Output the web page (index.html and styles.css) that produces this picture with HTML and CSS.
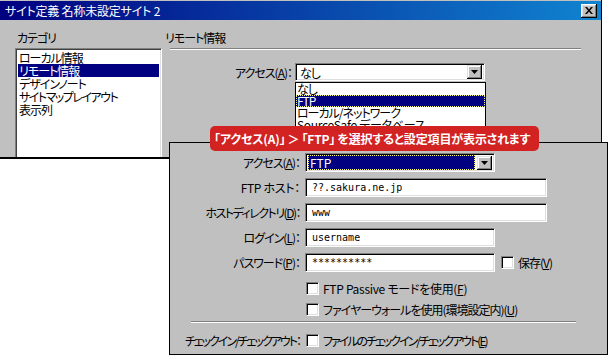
FILE: index.html
```html
<!DOCTYPE html>
<html lang="ja">
<head>
<meta charset="utf-8">
<title>サイト定義</title>
<link rel="stylesheet" href="styles.css">
</head>
<body>
<div class="stage">
  <div class="win">
    <div class="titlebar">
      <span class="title">サイト定義 名称未設定サイト 2</span>
      <span class="close"><svg width="8" height="7" viewBox="0 0 8 7"><path d="M0 0h2l2 2.4L6 0h2L5 3.5 8 7H6L4 4.6 2 7H0l3-3.5z" fill="#000"/></svg></span>
    </div>
    <div class="wbody">
      <div class="cat">
        <div class="lbl">カテゴリ</div>
        <ul class="listbox">
          <li>ローカル情報</li>
          <li class="sel">リモート情報</li>
          <li>デザインノート</li>
          <li class="tight">サイトマップレイアウト</li>
          <li>表示列</li>
        </ul>
      </div>
      <div class="remote">
        <div class="lbl">リモート情報</div>
        <div class="etch etch-top"></div>
        <div class="access">
          <span class="alabel">アクセス(<u>A</u>)：</span>
          <div class="combo">
            <span class="cval">なし</span>
            <span class="dbtn"><svg width="7" height="4" viewBox="0 0 7 4"><path d="M0 0h7L3.5 4z" fill="#000"/></svg></span>
          </div>
        </div>
        <ul class="droplist">
          <li>なし</li>
          <li class="sel">FTP</li>
          <li>ローカル/ネットワーク</li>
          <li class="latin">SourceSafe データベース</li>
        </ul>
      </div>
    </div>
  </div>

  <div class="banner">「アクセス(A)」 ＞ 「FTP」 を選択すると設定項目が表示されます</div>

  <div class="panel">
    <div class="row">
      <span class="plabel">アクセス(<u>A</u>)：</span>
      <div class="combo w190">
        <span class="cval selv">FTP</span>
        <span class="dbtn"><svg width="7" height="4" viewBox="0 0 7 4"><path d="M0 0h7L3.5 4z" fill="#000"/></svg></span>
      </div>
    </div>
    <div class="row">
      <span class="plabel latin">FTP ホスト：</span>
      <div class="field w242">??.sakura.ne.jp</div>
    </div>
    <div class="row">
      <span class="plabel tight">ホストディレクトリ(<u>D</u>)：</span>
      <div class="field w242">www</div>
    </div>
    <div class="row">
      <span class="plabel">ログイン(<u>L</u>)：</span>
      <div class="field w190">username</div>
    </div>
    <div class="row">
      <span class="plabel">パスワード(<u>P</u>)：</span>
      <div class="field w190">**********</div>
      <span class="chk chk-save"></span>
      <span class="ctext">保存(<u>V</u>)</span>
    </div>
    <div class="crow first">
      <span class="plabel"></span>
      <span class="chk"></span>
      <span class="ctext latin">FTP Passive モードを使用(<u>F</u>)</span>
    </div>
    <div class="crow">
      <span class="plabel"></span>
      <span class="chk"></span>
      <span class="ctext">ファイヤーウォールを使用(環境設定内)(<u>U</u>)</span>
    </div>
    <div class="etch etch-panel"></div>
    <div class="crow last">
      <span class="plabel xtight">チェックイン/チェックアウト：</span>
      <span class="chk"></span>
      <span class="ctext xtight">ファイルのチェックイン/チェックアウト(<u>E</u>)</span>
    </div>
  </div>
</div>
</body>
</html>
```

FILE: styles.css
```css
* { box-sizing: border-box; margin: 0; padding: 0; }
html, body { background: #fff; }
body {
  margin: 0;
  font-family: "Noto Sans CJK JP", "Noto Sans", sans-serif;
  font-size: 12px;
  line-height: 13px;
  letter-spacing: -1px;
  font-feature-settings: "palt" 1;
  color: #000;
}
u { text-decoration: underline; text-underline-offset: 1px; }
.tight { letter-spacing: -1.5px; }
.xtight { letter-spacing: -2px; }
.latin { letter-spacing: -0.3px; }

.stage {
  position: relative;
  width: 608px;
  height: 362px;
  overflow: hidden;
  background: #fff;
}

/* back window */
.win {
  width: 602px;
  height: 159px;
  background: #c0c0c0;
  border-right: 1px solid #000;
  border-bottom: 2px solid #000;
  padding-top: 1px;
  overflow: hidden;
}
.titlebar {
  height: 19px;
  background: linear-gradient(to right, #000080, #1084d0);
  color: #fff;
  display: flex;
  align-items: center;
  justify-content: space-between;
  padding: 0 4px 0 5px;
}
.title { font-size: 12px; line-height: 14px; letter-spacing: -0.2px; }
.close {
  width: 16px;
  height: 14px;
  background: #c0c0c0;
  box-shadow: inset -1px -1px #000, inset 1px 1px #fff, inset -2px -2px #808080, inset 2px 2px #dfdfdf;
  display: flex;
  align-items: center;
  justify-content: center;
}
.wbody {
  display: flex;
  padding: 11px 0 0 15px;
}
.lbl { height: 17px; line-height: 13px; padding-left: 2px; }
.cat { width: 147px; }
.listbox {
  list-style: none;
  background: #fff;
  height: 120px;
  border: 1px solid;
  border-color: #808080 #fff #fff #808080;
  box-shadow: inset 1px 1px #404040, inset -1px -1px #dfdfdf;
  padding: 2px 2px;
}
.listbox li { height: 13px; line-height: 13px; padding-left: 1px; white-space: nowrap; }
.listbox li.sel { background: #000080; color: #fff; }

.remote { margin-left: 3px; width: 436px; }
.remote > .lbl { padding-left: 0; }
.etch { height: 2px; border-top: 1px solid #808080; border-bottom: 1px solid #fff; }
.etch-top { margin-left: 5px; width: 411px; }
.access { display: flex; align-items: center; margin-top: 13px; }
.alabel { width: 127px; margin-right: 3px; text-align: right; }
.combo {
  width: 190px;
  height: 18px;
  background: #fff;
  border: 1px solid;
  border-color: #808080 #fff #fff #808080;
  box-shadow: inset 1px 1px #000, inset -1px -1px #dfdfdf;
  display: flex;
  align-items: center;
  justify-content: space-between;
  padding: 1px 2px 1px 2px;
}
.cval { padding-left: 2px; line-height: 13px; }
.dbtn {
  width: 15px;
  height: 14px;
  background: #c0c0c0;
  box-shadow: inset -1px -1px #000, inset 1px 1px #dfdfdf, inset -2px -2px #808080, inset 2px 2px #fff;
  display: flex;
  align-items: center;
  justify-content: center;
  flex: none;
}
.droplist {
  list-style: none;
  margin-left: 130px;
  margin-top: 1px;
  width: 191px;
  background: #fff;
  border: 1px solid #000;
  height: 70px;
}
.droplist li { height: 12px; line-height: 12px; padding-left: 1px; white-space: nowrap; }
.droplist li.sel { background: #000080; color: #fff; outline: 1px dotted #ffff80; outline-offset: -1px; }

/* callout banner */
.banner {
  position: absolute;
  left: 210px;
  top: 126px;
  width: 329px;
  height: 25px;
  border-radius: 5px;
  background: #d22222;
  color: #fff;
  font-weight: bold;
  font-size: 12px;
  line-height: 25px;
  letter-spacing: -0.15px;
  word-spacing: -0.5px;
  text-align: left;
  padding-left: 4px;
  white-space: nowrap;
  z-index: 3;
}

/* front panel */
.panel {
  position: absolute;
  left: 169px;
  top: 142px;
  width: 439px;
  height: 213px;
  background: #c0c0c0;
  border: 1px solid #000;
  padding-top: 10px;
  z-index: 2;
}
.row { display: flex; align-items: center; height: 19px; margin-bottom: 6px; }
.plabel { width: 130px; margin-right: 5px; text-align: right; white-space: nowrap; flex: none; }
.w190 { width: 190px; }
.w242 { width: 242px; }
.combo.w190 { height: 19px; }
.selv {
  flex: 1;
  margin-right: 2px;
  height: 15px;
  background: #000080;
  color: #fff;
  border: 1px dotted #ffff80;
  padding-left: 1px;
  line-height: 13px;
  letter-spacing: 0;
}
.field {
  height: 19px;
  background: #fff;
  border: 1px solid;
  border-color: #808080 #fff #fff #808080;
  box-shadow: inset 1px 1px #000, inset -1px -1px #dfdfdf;
  font-family: "DejaVu Sans Mono", "Liberation Mono", monospace;
  font-size: 10px;
  letter-spacing: 0;
  line-height: 17px;
  padding-left: 6px;
}
.chk {
  width: 13px;
  height: 13px;
  background: #fff;
  border: 1px solid;
  border-color: #808080 #fff #fff #808080;
  box-shadow: inset 1px 1px #000, inset -1px -1px #dfdfdf;
  flex: none;
}
.chk-save { margin-left: 6px; }
.ctext { margin-left: 4px; white-space: nowrap; }
.crow { display: flex; align-items: center; height: 21px; }
.crow .chk { margin-left: 1px; }
.crow.first { margin-top: 3px; }
.crow.last { margin-top: 7px; }
.etch-panel { margin-left: 21px; width: 385px; margin-top: 1px; }
```
